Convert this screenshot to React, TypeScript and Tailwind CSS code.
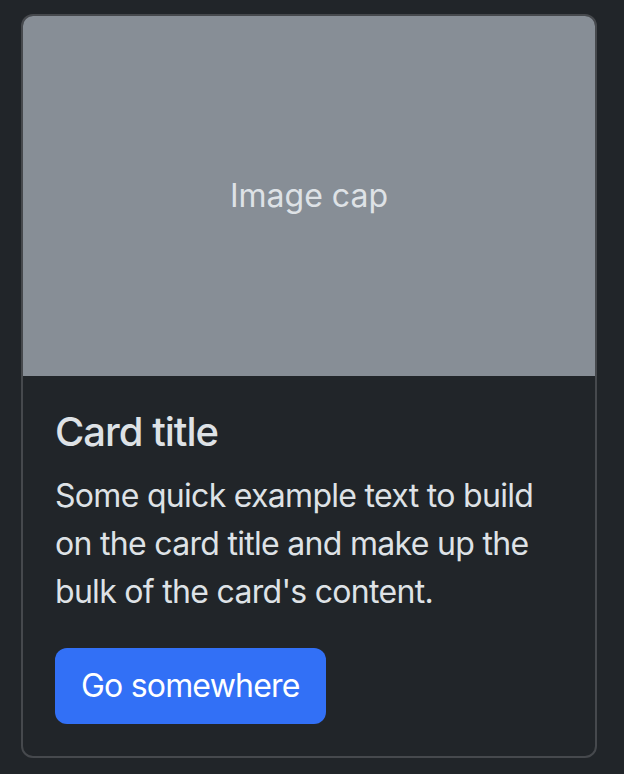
export default function App() {
  return (
    <div className="min-h-[774px] w-full bg-[#212529] pl-[21px] pt-[14px] font-['Inter',sans-serif] text-[#dee2e6]">
      <div className="w-[576px] overflow-hidden rounded-[12px] border-2 border-[#46494d] bg-[#212529]">
        <div className="flex h-[360px] items-center justify-center bg-[#878e96] text-[32px] text-[#dee2e6]">
          Image cap
        </div>
        <div className="p-[32px]">
          <h5 className="mb-[16px] text-[40px] leading-[48px] font-medium tracking-[-1px]">Card title</h5>
          <p className="mb-[32px] text-[32px] leading-[48px] tracking-[-0.7px]">
            Some quick example text to build on the card title and make up the bulk of the card's content.
          </p>
          <button className="h-[76px] rounded-[12px] bg-[#3270f6] px-[26px] text-[32px] leading-[48px] tracking-[-0.8px] text-white">
            Go somewhere
          </button>
        </div>
      </div>
    </div>
  );
}
